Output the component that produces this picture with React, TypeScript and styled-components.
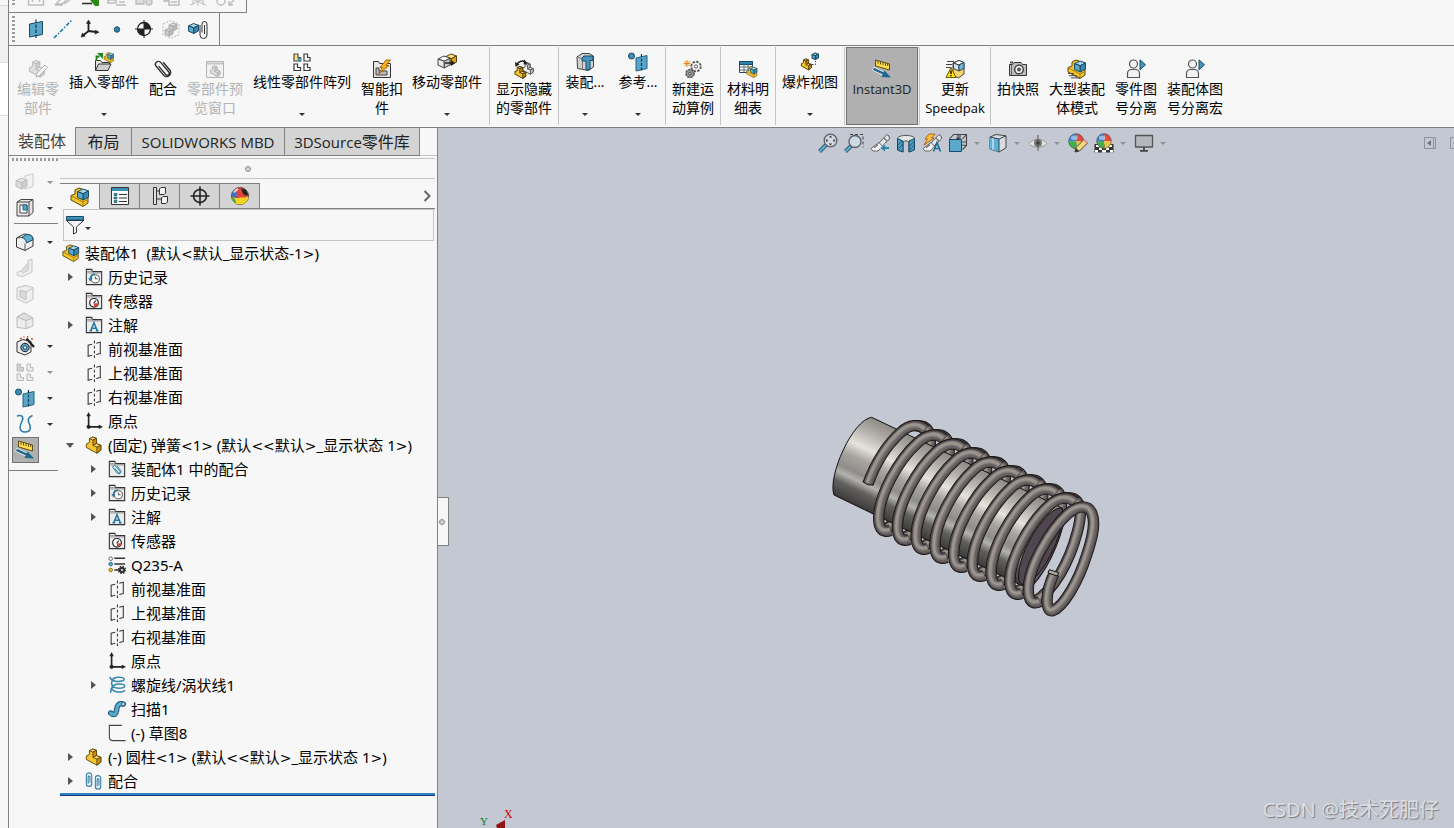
import React from 'react';
import styled, { createGlobalStyle, css } from 'styled-components';

const c = {
  bg: '#f7f7f7',
  tab: '#d4d4d4',
  line: '#808080',
  soft: '#c4c4c4',
  canvas: '#c4c8d3',
  blue: '#5aa9cb',
  deep: '#1f6284',
  pale: '#a9d5e8',
  gold: '#f6c629',
  goldDark: '#c8941a',
  mute: '#bdbdbd',
};

const Global = createGlobalStyle`
  *, *::before, *::after { box-sizing: border-box; }
  body { margin: 0; background: ${c.bg}; color: #000; font-family: "Open Sans", "Noto Sans CJK SC", sans-serif; overflow: hidden; }
  button { font: inherit; color: inherit; background: none; border: 0; padding: 0; margin: 0; }
  ul { list-style: none; margin: 0; padding: 0; }
`;

/* ---------- icon drawings, all on a 20 x 20 grid ---------- */

const Cube = ({ x = 0, y = 0, s = 10, top = c.pale, left = c.blue, right = '#3c87aa', line = '#174a66' }: {
  x?: number; y?: number; s?: number; top?: string; left?: string; right?: string; line?: string;
}) => (
  <g transform={`translate(${x} ${y}) scale(${s / 10})`} stroke={line} strokeWidth={10 / s} strokeLinejoin="round">
    <path d="M0 2.5L5 0l5 1.8L5.2 4.3z" fill={top} />
    <path d="M0 2.5l5.2 1.8V10L0 7.6z" fill={left} />
    <path d="M5.2 4.3L10 1.8v5.6L5.2 10z" fill={right} />
  </g>
);

const Part = ({ x = 0, y = 0, s = 1, main = c.gold, lite = '#ffe27a', dark = c.goldDark, line = '#5c440c' }: {
  x?: number; y?: number; s?: number; main?: string; lite?: string; dark?: string; line?: string;
}) => (
  <g transform={`translate(${x} ${y}) scale(${s})`} stroke={line} strokeWidth={1 / s} strokeLinejoin="round">
    <path d="M1.500 8.500L5 7V2.500l4-1.800 4 1.500v6l5 1.800v5.500L13.500 19 1.500 12.500z" fill={main} />
    <path d="M5 2.500l4-1.800 4 1.500-4 2z" fill={lite} />
    <path d="M9 4.200l4-2v6l-4 2z" fill={dark} />
    <path d="M9 10.200l4-2 5 1.800-4.500 2z" fill={lite} />
    <path d="M13.500 12L18 10v5.500L13.500 19z" fill={dark} />
  </g>
);

const Assembly = (
  <>
    <path d="M1 8.500L5 7V3l4-2 3 1 6 8v6l-5 3.500L1 13z" fill={c.gold} stroke="#5c440c" strokeLinejoin="round" />
    <path d="M1.500 9l11.500 6v4" fill="none" stroke="#a77a12" />
    <path d="M13 15l5-2.500" fill="none" stroke="#a77a12" />
    <Cube x={7.500} y={2} s={11} />
  </>
);

const Folder = (
  <>
    <path d="M1.500 18.500v-17h6l1 2.500h10v14.500z" fill="#ececec" stroke="#333" strokeWidth="1.200" />
    <path d="M2 4h6.500M2.500 5.500H18" fill="none" stroke="#8c8c8c" />
  </>
);

const BluePlane = (
  <>
    <path d="M8 6l11-2.500v13L8 19z" fill="#58a5c8" stroke={c.deep} />
    <path d="M13.500 2v18" stroke="#12384d" strokeDasharray="3 1.500" strokeWidth="1.200" />
    <circle cx="3.500" cy="4" r="3" fill="#3f8fb4" stroke="#174a66" />
  </>
);

const Ruler = (
  <>
    <path d="M3.500 1L17.500 5v6L3.500 7z" fill="#ffd94d" stroke="#5e4b0e" strokeLinejoin="round" />
    <path d="M6 2.200v2.500M8.500 2.800v2.500M11 3.500V6M13.500 4.200v2.500M15.700 5v2" stroke="#5e4b0e" />
    <path d="M1 9.500l11.500 5.800" stroke="#f3f3f3" strokeWidth="4" />
    <path d="M1.500 9.800l11 5.200" stroke="#1e678e" strokeWidth="2.400" />
    <path d="M12.500 11.500L19 18.500l-9.500-.5z" fill="#1e678e" />
  </>
);

const Person = (
  <>
    <circle cx="7.500" cy="5" r="4" fill="#f2f2f2" stroke="#555" strokeWidth="1.200" />
    <path d="M1.500 18.500v-4c0-2.500 2-4 4-4h4c2 0 4 1.500 4 4v4z" fill="#f2f2f2" stroke="#555" strokeWidth="1.200" strokeLinejoin="round" />
    <path d="M14 .8l5.500 5-5.500 5z" fill="#3f95bd" stroke="#174a66" />
  </>
);

const Ball = ({ x = 0, y = 0, r = 8 }: { x?: number; y?: number; r?: number }) => (
  <g transform={`translate(${x} ${y}) scale(${r / 8})`}>
    <path d="M0 8a8 8 0 0 1 8-8c1 3 1 5 0 8z" fill="#3f7fd0" />
    <path d="M8 0a8 8 0 0 1 8 8H8c1-3 1-5 0-8z" fill="#dd4b42" />
    <path d="M0 8h8c1 3 1 5 0 8a8 8 0 0 1-8-8z" fill="#43ae50" />
    <path d="M8 8h8a8 8 0 0 1-8 8c1-3 1-5 0-8z" fill="#f1c543" />
    <ellipse cx="6" cy="4.500" rx="3.500" ry="2.500" fill="#fff" opacity=".45" />
    <circle cx="8" cy="8" r="7.700" fill="none" stroke="#555" strokeWidth=".7" />
  </g>
);

const clip = 'M7 13.500V5a2.500 2.500 0 0 1 5 0v11a3.500 3.500 0 0 1-7 0V6M9.500 6v9';

const Brush = (
  <>
    <path d="M9 10L17 1.500l2 1.500.5 3L12 13z" fill="#e8e8e8" stroke="#555" strokeLinejoin="round" />
    <path d="M9 9.500l3.500 3.800L8 18H3l-2-2.500z" fill="#f5f5f5" stroke="#666" strokeLinejoin="round" />
    <path d="M4 15l4-3.500M14 5l3 3" stroke="#777" strokeWidth="1.300" />
  </>
);

const icons: Record<string, React.ReactNode> = {
  assembly: Assembly,
  part: <Part x={0} y={0.500} s={0.980} />,
  editPart: (
    <>
      <Part y={1} s={0.900} main="#dedede" lite="#efefef" dark="#cfcfcf" line="#bdbdbd" />
      <path d="M8 18l1-4 8-8 2.500 2.500-8 8z" fill="#f7f7f7" stroke="#b0b0b0" />
    </>
  ),
  insert: (
    <>
      <path d="M1.500 18.500V8.500h5l1.500 2h7.500v2" fill="#e6e6e6" stroke="#333" />
      <path d="M1.500 18.500l3-6.500H17l-3 6.500z" fill="#cfcfcf" stroke="#333" strokeLinejoin="round" />
      <path d="M2.500 9V4.500h3" stroke="#1d7d1d" strokeWidth="1.800" fill="none" />
      <path d="M3 1h6v6z" fill="#1d8a1d" />
      <g transform="translate(9.500 0) scale(.55)">{Assembly}</g>
    </>
  ),
  mate: (
    <g transform="rotate(-40 10 10)" fill="none" stroke="#333" strokeWidth="1.400">
      <path d="M6.500 15V3.500a3 3 0 0 1 6 0V16a2 2 0 0 1-4 0V5M6.500 14a4 4 0 0 0 8 2V5" />
    </g>
  ),
  preview: (
    <>
      <path d="M1.500 2.500h17v16h-17z" fill="#f2f2f2" stroke="#b4b4b4" />
      <path d="M2 4.500h16" stroke="#c4c4c4" strokeWidth="2" />
      <Part x={4.500} y={6.500} s={0.580} main="#dedede" lite="#eee" dark="#ccc" line="#b4b4b4" />
    </>
  ),
  pattern: (
    <>
      <path d="M2 2h4v3.500h2.500V9H2z" fill="#ffe27a" stroke="#4b4b4b" strokeWidth="1.200" />
      <path d="M12 2h3.500v3.500H18V9h-6zM2 12h3.500v3.500H8.500V18.500H2zM12 12h3.500v3.500H18v3h-6z" fill="#fff" stroke="#3a3a3a" strokeWidth="1.200" />
      <path d="M6 6h3v3H6z" fill={c.blue} stroke={c.deep} strokeWidth=".6" />
    </>
  ),
  fastener: (
    <>
      <path d="M1.500 18.500V2.500h5l1 2h11v14z" fill="#e6e6e6" stroke="#333" />
      <path d="M4 15V9h3v3h8v4H4z" fill="#bbb" stroke="#444" />
      <path d="M14 1h4.500L14 6.500h3L6.500 15l4-6.500H8z" fill="#ffb21c" stroke="#8a4b00" strokeWidth=".8" />
    </>
  ),
  move: (
    <>
      <Cube x={8.500} y={2} s={11} top="#ffe27a" left="#f6c629" right="#d8a21c" line="#5c440c" />
      <Cube x={1} y={4} s={12} top="#fff" left="#e8e8e8" right="#c9c9c9" line="#444" />
      <path d="M8 11h7" stroke="#222" strokeWidth="1.500" />
      <path d="M14 8l4 3-4 3z" fill="#222" />
    </>
  ),
  showHide: (
    <>
      <Part x={8} y={3.500} s={0.620} main="#eee" lite="#fff" dark="#ccc" line="#555" />
      <Part x={0} y={7} s={0.650} />
      <path d="M2.500 6C4 2.500 8 1 11.500 3" fill="none" stroke="#222" strokeWidth="1.500" />
      <path d="M1 3l.5 5 4-2.500zM10 .5l4 4-4.500 1z" fill="#222" />
    </>
  ),
  feature: (
    <>
      <path d="M2 5l5-3.500h7L18.500 4v11l-5 3.500-11-2z" fill="#cfcfcf" stroke="#444" />
      <path d="M2.500 5l5 2v10" fill="none" stroke="#777" />
      <path d="M7 6l2-2h9v4.500h-3V17l-4 1V9H7z" fill="#4697bb" stroke="#174a66" />
    </>
  ),
  reference: BluePlane,
  motion: (
    <>
      <circle cx="13" cy="7.500" r="4.800" fill="#f1f1f1" stroke="#555" strokeWidth="1.800" strokeDasharray="2.500 1.200" />
      <circle cx="13" cy="7.500" r="1.600" fill="#fff" stroke="#555" />
      <circle cx="7" cy="14.500" r="4" fill="#999" stroke="#555" strokeWidth="1.600" strokeDasharray="2.300 1" />
      <circle cx="7" cy="14.500" r="1.300" fill="#eee" stroke="#444" />
      <path d="M4 1v7M.5 4.500h7M1.500 2l5 5M6.500 2l-5 5" stroke="#e58a1a" />
    </>
  ),
  bom: (
    <>
      <path d="M1.500 2.500h13v11h-13z" fill="#fff" stroke="#2b4c5e" />
      <path d="M1.500 2.500h13v3h-13z" fill="#2f83a8" stroke="#174a66" />
      <path d="M2 8h12M2 11h12M6 5v8M10 5v8" stroke="#55707f" />
      <g transform="translate(8 7) scale(.6)">{Assembly}</g>
    </>
  ),
  explode: (
    <>
      <Part x={0.500} y={6.500} s={0.600} />
      <Cube x={12} y={1} s={6.500} />
      <path d="M9 12.500h6.500V9" fill="none" stroke="#333" strokeDasharray="1.500 1.500" />
    </>
  ),
  instant3d: Ruler,
  update: (
    <>
      <path d="M2 2.500h7M1 5.500h6M1 8.500h5" stroke="#444" />
      <path d="M8 4l6-2.500L19 4v11l-5.500 4L8 16z" fill="#f3d36a" stroke="#444" />
      <Cube x={8.500} y={1.500} s={10.500} top="#fff" left="#d3e7f0" right="#74b4d0" line="#345" />
      <path d="M6 8.500l5 10H1z" fill="#ffe000" stroke="#6b5900" strokeLinejoin="round" />
      <path d="M6 11.500v3.500M6 16v1.300" stroke="#000" strokeWidth="1.400" />
    </>
  ),
  camera: (
    <>
      <path d="M1.500 5.500h3l1.500-2h7l1.500 2h4v11h-17z" fill="#bdbdbd" stroke="#333" />
      <path d="M2 2.500h3v2H2z" fill="#555" />
      <path d="M3.500 6v10" stroke="#666" />
      <circle cx="11" cy="10.500" r="4.300" fill="#eee" stroke="#333" strokeWidth="1.300" />
      <circle cx="11" cy="10.500" r="2" fill="#555" />
    </>
  ),
  largeAsm: (
    <>
      {Assembly}
      <path d="M1 14.500h6M2 16.700h8M4 18.900h9" stroke="#444" />
    </>
  ),
  person: Person,

  plane: (
    <>
      <path d="M3.500 5L16.500 2.500v13L3.500 18z" fill="#5aa5c8" stroke="#174a66" />
      <path d="M10 .5v19" stroke="#12384d" strokeDasharray="3.500 1.500" strokeWidth="1.200" />
    </>
  ),
  axis: <path d="M1 19L19 1" stroke="#2c7da5" strokeWidth="1.700" strokeDasharray="4 1.600 1.500 1.600" />,
  coord: (
    <g stroke="#222" strokeWidth="1.800" fill="#222">
      <path d="M8.500 12V3M8.500 12l8 1M8.500 12L3 16.500" />
      <path d="M8.500 1L6.500 4.500h4zM19 13.200l-3.500-2-.5 3.800zM1 18l1.500-4 2.500 3.200z" strokeWidth=".6" />
    </g>
  ),
  point: <circle cx="10" cy="10.500" r="2.700" fill="#3485ad" stroke="#174a66" />,
  mass: (
    <>
      <circle cx="10" cy="10" r="6.500" fill="#f7f7f7" stroke="#222" strokeWidth="1.300" />
      <path d="M10 3.500A6.500 6.500 0 0 0 3.500 10H10zM10 16.500A6.500 6.500 0 0 0 16.500 10H10z" transform="rotate(90 10 10)" fill="#222" />
      <path d="M10 1v18M1 10h18" stroke="#222" />
    </>
  ),
  bbox: (
    <>
      <path d="M2 5l8-3.500L18 5v11l-8 3-8-3z" fill="none" stroke="#b5b5b5" strokeDasharray="2 1.500" />
      <Cube x={4} y={9} s={8} top="#ddd" left="#ccc" right="#bbb" line="#aaa" />
      <Cube x={8} y={4} s={8} top="#ddd" left="#ccc" right="#bbb" line="#aaa" />
    </>
  ),
  mateRef: (
    <>
      <Cube x={0.500} y={4.500} s={10} />
      <g transform="translate(7 0)"><path d={clip} fill="none" stroke="#333" /></g>
    </>
  ),

  ghost1: (
    <>
      <path d="M10 4l8-2.500v13L10 17z" fill="#f2f2f2" stroke="#ccc" />
      <Cube x={1} y={6} s={11} top="#e6e6e6" left="#dcdcdc" right="#cfcfcf" line="#bebebe" />
    </>
  ),
  section: (
    <>
      <path d="M2 4l4-2.500h12v13L14 18H2z" fill="#e8e8e8" stroke="#444" strokeLinejoin="round" />
      <path d="M2 4h12v14M14 4l4-2.500" fill="none" stroke="#444" />
      <path d="M5 7h7v8H5z" fill="#fff" stroke="#444" />
      <path d="M8 7v5h4V7z" fill={c.blue} stroke={c.deep} />
    </>
  ),
  fillet: (
    <>
      <path d="M1.500 6L9 2l4 .5c3 .5 5 2 5 5V14l-8 4.500L1.500 15z" fill="#f0f0f0" stroke="#333" strokeLinejoin="round" />
      <path d="M6.500 5.500L12 2.300l2 .4c3 1 4 2.300 4 5L11.500 11C11 8 9.500 6 6.500 5.500z" fill="#5eb0d2" stroke="#174a66" />
      <path d="M1.500 6l5-.5M10 11.500v7" fill="none" stroke="#555" />
    </>
  ),
  rib: (
    <g fill="#ededed" stroke="#c6c6c6" strokeLinejoin="round">
      <path d="M2 14.500L13 10V2.500l4-1.500v13L8 18.500l-6-1z" />
      <path d="M6 13L13 5v7l-5 3z" fill="#dcdcdc" />
    </g>
  ),
  shell: (
    <g stroke="#c2c2c2" strokeLinejoin="round">
      <path d="M2 4l8-2.500L18 3.500v12L11 19l-9-4z" fill="#efefef" />
      <path d="M5 6l6 2v8l-6-3zM11 8l7-4" fill="#dadada" />
    </g>
  ),
  draft: (
    <g stroke="#bcbcbc" strokeLinejoin="round">
      <path d="M2 7l7-4 9 5v8l-7 2.500-9-1z" fill="#ececec" />
      <path d="M2 7l9 3.500 7-2.500-9-5z" fill="#dedede" />
      <path d="M11 10.500V18.500" fill="none" />
    </g>
  ),
  wizard: (
    <>
      <path d="M2 6l6-2.500L16 5.500V16l-6 3-8-3z" fill="#ececec" stroke="#333" strokeLinejoin="round" />
      <circle cx="10" cy="11.500" r="4.200" fill="#58a5c8" stroke="#222" />
      <circle cx="10" cy="11.500" r="1.800" fill="#cfe7f2" stroke="#345" />
      <path d="M11.500 2.500L19 11" stroke="#222" strokeWidth="2.200" />
      <path d="M5 2.500h2M12 .8h1.500M16 3h2M8.500 1h1" stroke="#d1581c" strokeWidth="1.500" />
    </>
  ),
  patternOff: (
    <g fill="#ececec" stroke="#b8b8b8">
      <path d="M2 2h3.500v3.500H8.500V9H2z" fill="#d2d2d2" />
      <path d="M12 2h3.500v3.500H18V9h-6zM2 12h3.500v3.500H8.500V18.500H2zM12 12h3.500v3.500H18v3h-6z" />
    </g>
  ),
  curve: <path d="M2 2c5-1.500 7 1 5 5-2 4-4 11 3 11s5.500-6 4-9c-1.500-3.500-.5-6 3.500-7.500" fill="none" stroke="#2c7da5" strokeWidth="1.600" />,

  props: (
    <>
      <path d="M1.500 1.500h17v17h-17z" fill="#fff" stroke="#333" />
      <path d="M2 2h16v3H2z" fill="#3a90b6" />
      <path d="M4 7.500h3v2H4zM4 11h3v2H4zM4 14.500h3v2H4z" fill="#3a90b6" stroke="#174a66" strokeWidth=".6" />
      <path d="M9 8.500h8M9 12h8M9 15.500h8" stroke="#333" />
    </>
  ),
  config: (
    <g stroke="#333" fill="#e0e0e0" strokeLinejoin="round">
      <path d="M3.500 18.500v-17h3v17zM6.500 5h3M6.500 13h6" />
      <path d="M9.500 3L11 1.500h4.500V7L14 8.500H9.500zM11.500 12L13 10.500h4.500V16L16 17.500h-4.500z" fill="#f5f5f5" />
    </g>
  ),
  target: (
    <g fill="none" stroke="#222" strokeWidth="1.600">
      <circle cx="10" cy="10" r="6.500" />
      <path d="M10 .5v19M.5 10h19" />
    </g>
  ),
  appearance: (
    <>
      <circle cx="10" cy="10" r="8.500" fill="#e0453a" stroke="#444" />
      <path d="M1.500 10C2 5 6 1.500 10 1.500 7 4 6 8 7 12z" fill="#3b6fd0" />
      <path d="M5 4C7 2 9 1.500 11 1.500L8 9z" fill="#e0453a" />
      <path d="M1.600 11C4 12 8 12.500 10 11.500c3 0 6 0 8.500-1C18 15 15 18.500 10 18.500 5 18.500 2 15 1.600 11z" fill="#f4d321" />
      <path d="M1.600 10.500c3 1.500 4.500 4 4.500 7C3 16 1.600 13 1.600 10.500z" fill="#3fab49" />
      <path d="M11 2.500l5 1.500 2 5c-2 1-4 0-5-1.500z" fill="#222" />
      <path d="M4 6.500C5 4.500 6.500 3.500 8 3" stroke="#fff" strokeWidth="2" fill="none" opacity=".7" />
    </>
  ),
  funnel: (
    <>
      <path d="M1.500 5.500L8.500 12v7l3-1.500V12l7-6.500z" fill="#f3f3f3" stroke="#333" strokeLinejoin="round" />
      <path d="M1.500 1.500h17v3.500h-17z" fill="#3a93ba" stroke="#174a66" />
    </>
  ),
  history: (
    <>
      {Folder}
      <circle cx="11.500" cy="12" r="4.500" fill="#fff" stroke="#444" />
      <path d="M11.500 9.500V12h2.500" fill="none" stroke="#333" />
      <path d="M11 7C8 7 6 9 6 12" fill="none" stroke="#2c7da5" strokeWidth="1.600" />
      <path d="M3.500 11.500h5L6 15z" fill="#2c7da5" />
    </>
  ),
  sensor: (
    <>
      {Folder}
      <circle cx="10" cy="12" r="4.800" fill="#fff" stroke="#222" strokeWidth="1.300" />
      <path d="M10 12.500h4.300A4.300 4.300 0 0 1 10 16.300z" fill="#e2412c" />
      <path d="M9.500 12.500l2.500-3" stroke="#222" strokeWidth="1.300" />
    </>
  ),
  note: (
    <>
      {Folder}
      <path d="M6.500 16L10 7.500 13.500 16M7.500 13.500h5M5 16.300h3M12 16.300h3" fill="none" stroke="#22789f" strokeWidth="1.700" />
    </>
  ),
  mateFolder: (
    <>
      {Folder}
      <g transform="translate(4.500 4.500) rotate(-40 6 7) scale(.6)" fill="none" stroke="#2c7da5" strokeWidth="1.700">
        <path d="M6.500 15V3.500a3 3 0 0 1 6 0V16a2 2 0 0 1-4 0V5M6.500 14a4 4 0 0 0 8 2V5" />
      </g>
    </>
  ),
  planeLine: (
    <path d="M8 4.700L3.500 5.800v12.400L8 17M12.500 3.600L17 2.500v12.500l-4.500 1.200M10.500 .5v3.500M10.500 6.500v3M10.500 12v3M10.500 17v3" fill="none" stroke="#3a3a3a" strokeWidth="1.200" />
  ),
  origin: (
    <g fill="#222" stroke="#222">
      <path d="M4 16.500V3M4 16.500h13" strokeWidth="1.800" />
      <path d="M4 .5L2 4.500h4zM19.500 16.500l-4-2v4z" strokeWidth=".5" />
      <circle cx="4" cy="16.500" r="1.800" />
    </g>
  ),
  material: (
    <>
      <circle cx="3" cy="3" r="2" fill="#fff" stroke="#555" />
      <circle cx="3" cy="9" r="2" fill={c.blue} stroke={c.deep} />
      <circle cx="3" cy="15.500" r="2" fill={c.gold} stroke="#8a6a10" />
      <path d="M7 2.500h12M7 9h12M7 15.500h6" stroke="#333" strokeWidth="1.700" />
      <circle cx="15.500" cy="15.500" r="2.300" fill="#fff" stroke="#333" strokeWidth="2.400" />
      <circle cx="15.500" cy="15.500" r="4" fill="none" stroke="#333" strokeWidth="1.500" strokeDasharray="1.600 1.550" />
    </>
  ),
  helix: (
    <g fill="none" stroke="#3486ad" strokeWidth="1.700">
      <path d="M2 1c1 3 3 4.500 8 5 5 .2 8-1 8-2.500S15 1.200 11 1.400C6 1.600 4 4 4 8c0 3.500 3 5.500 8 5.500 4 0 6.500-1 6.500-2.500S16 9 12 9c-6 0-9 3-9 9.500" />
      <path d="M4.500 14c1 3 4 3.800 7.500 3.800s6.500-.8 6.500-2.300" />
    </g>
  ),
  sweep: (
    <>
      <path d="M3 14.500c4 3.500 6 1 6.500-3C10 7 11 3 17 4.500" fill="none" stroke="#174a66" strokeWidth="6" strokeLinecap="round" />
      <path d="M3 14.500c4 3.500 6 1 6.500-3C10 7 11 3 17 4.500" fill="none" stroke="#58a9ce" strokeWidth="4" strokeLinecap="round" />
      <circle cx="17" cy="4.500" r="2" fill="#a9d5e8" stroke="#174a66" strokeWidth=".7" />
    </>
  ),
  sketch: <path d="M15.500 1.500h-14v13c0 2.500 1.500 4 4 4h14" fill="none" stroke="#444" strokeWidth="1.200" />,
  mates: (
    <g fill="none" stroke="#2f7fa5" strokeWidth="1.200">
      <path d="M1.500 4v9a3 3 0 0 0 6 0V4a3 3 0 0 0-6 0M3.500 13V5.500a1 1 0 0 1 2 0V12" />
      <path d="M11.500 7v9a3 3 0 0 0 6 0V7a3 3 0 0 0-6 0M13.500 16V8.500a1 1 0 0 1 2 0V15" />
    </g>
  ),

  zoomFit: (
    <>
      <path d="M1.500 18.500L8 12" stroke="#285e7a" strokeWidth="4" />
      <path d="M1.500 18.500L8 12" stroke="#66b0d0" strokeWidth="2" />
      <circle cx="12.500" cy="7.500" r="6.300" fill="#d5dae2" stroke="#5b6068" strokeWidth="1.300" />
      <path d="M12.500 2.500l1.700 2h-3.400zM12.500 12.500l1.700-2h-3.400zM7.500 7.500l2-1.700v3.400zM17.500 7.500l-2-1.700v3.400z" fill="#333" />
    </>
  ),
  zoomArea: (
    <>
      <path d="M6 1.500h13v13" fill="none" stroke="#444" strokeDasharray="3 2" />
      <path d="M1.500 18.500L7 13" stroke="#285e7a" strokeWidth="4" />
      <path d="M1.500 18.500L7 13" stroke="#66b0d0" strokeWidth="2" />
      <circle cx="11" cy="8.500" r="6" fill="#ccd8e2" stroke="#5b6068" strokeWidth="1.300" />
    </>
  ),
  prevView: (
    <>
      {Brush}
      <path d="M19.500 13.500h-4v-3L10 15l5.500 4.500v-3h4z" fill="#2f83a8" stroke="#e8e8e8" strokeWidth=".6" />
    </>
  ),
  cut: (
    <>
      <path d="M1.500 5C4 1.500 16 1.500 18.500 5v11.500L13 19V9c-2-1.500-4-1.500-6 0v10l-5.500-2z" fill="#e5e5e5" stroke="#555" />
      <path d="M1.500 5.500L7 8v11l-5.500-2zM13 8l5.500-2.500V17L13 19z" fill="#4a9cc0" stroke="#174a66" />
      <path d="M2 12l4-4M2 16l5-5M13.500 13l5-5M13.500 17l5-5" stroke="#174a66" strokeWidth=".8" />
    </>
  ),
  dynView: (
    <>
      {Brush}
      <path d="M7 1h6L9.500 5H12L2 12l3.500-6H3z" fill="#ffbe3c" stroke="#a14f0c" strokeWidth=".8" />
      <path d="M11.500 18.500L15 9.500l3.500 9M12.500 15.500h5" fill="none" stroke="#1f6b94" strokeWidth="1.600" />
    </>
  ),
  orient: (
    <>
      <path d="M5.500 1.500h13v11l-4 4M1.500 6l4-4.500M14.500 6l4-4.500M12 1.500v8M7 9h11M14 12l4 .5" fill="none" stroke="#444" strokeWidth="1.100" />
      <path d="M1.500 6.500h12v12h-12z" fill="#5aa9cb" stroke="#174a66" />
      <path d="M10 2v4M8.500 4.500L10 6.500l1.500-2" stroke="#222" fill="none" />
    </>
  ),
  display: (
    <>
      <path d="M2 4l6-2.500 10 1.300v12L11 19l-9-3z" fill="#d8dde0" stroke="#444" strokeLinejoin="round" />
      <path d="M2 4l9 2v13l-9-3z" fill="#5fb0d2" />
      <path d="M5 5v11.500" stroke="#a9d5e8" strokeWidth="2" />
      <path d="M2 4l9 2v13M11 6l7-3.200" fill="none" stroke="#345" />
    </>
  ),
  eye: (
    <>
      <path d="M1 10.500C5 5 15 5 19 10.500 15 15.500 5 15.500 1 10.500z" fill="#e3e3e3" stroke="#999" />
      <circle cx="10" cy="10" r="4" fill="#777" />
      <circle cx="10" cy="10" r="1.800" fill="#333" />
      <path d="M10 2v16" stroke="#555" />
    </>
  ),
  editLook: (
    <>
      <Ball x={0.500} y={0.500} r={7.700} />
      <path d="M7 19l1-4.500 8-8 3.500 3.500-8 8z" fill="#f5d877" stroke="#444" strokeLinejoin="round" />
      <path d="M7 19l1-4 3 3z" fill="#333" />
      <path d="M15 7.500l3.500 3.500 1-1.500L16.500 6z" fill="#e39a95" />
    </>
  ),
  scene: (
    <>
      <path d="M.5 11h19l0 8.500H.5z" fill="#333" />
      <path d="M2 12h3v2H2zM8 17h4v2.500H8zM15 12h3v2h-3zM5 14.500h3v2.500H5zM12 14.500h3v2.500h-3zM1 17h3v2.500H1zM16 17h3v2.500h-3z" fill="#fff" />
      <Ball x={2.500} y={0.500} r={7.500} />
    </>
  ),
  monitor: (
    <>
      <path d="M1.500 2.500h17v11.500h-17z" fill="#b4b7bc" stroke="#555" strokeWidth="1.300" />
      <path d="M10 14v3.500M6 17.800h8" stroke="#444" strokeWidth="1.800" />
    </>
  ),
  paneToggle: (
    <>
      <path d="M4.500 4.500h11v11h-11zM13.500 4.500v11" fill="none" stroke="#8d929c" />
      <path d="M11 7v6l-4-3z" fill="#6d727c" />
    </>
  ),

  cutA: <path d="M2.500 4h15v14h-15zM6 15l4-9 4 9M7.500 12h5" fill="none" stroke={c.mute} strokeWidth="1.400" />,
  cutPen: <path d="M3 17l9-9 5 2-8 7zM2 18h8M11 17l6-4" fill="none" stroke={c.mute} strokeWidth="1.400" />,
  cutGreen: (
    <>
      <path d="M2 16.500h10" stroke="#333" strokeWidth="1.600" />
      <path d="M19 19v-8l-8 2z" fill="#2a8a14" />
      <path d="M10 13l5-1 4 7h-4z" fill="#2a8a14" />
    </>
  ),
  cutLine: <path d="M1 13h8v3H1zM9 18h10M12 15h6" fill="none" stroke={c.mute} strokeWidth="1.600" />,
  cutCam: <path d="M2 12h8v5H2zM12 15a3 3 0 1 0 6 0 3 3 0 1 0-6 0z" fill="#ddd" stroke={c.mute} strokeWidth="1.400" />,
  cutBox: <path d="M2 11l5 3h-5M8 12h10v6H8zM10 15h6" fill="none" stroke={c.mute} strokeWidth="1.600" />,
  cutMesh: <path d="M2 11l16 7M2 18l16-7M10 9v10M5 10v8M15 10v8" fill="none" stroke={c.mute} />,
  cutRing: <path d="M2 14a4 4 0 1 0 8 0 4 4 0 1 0-8 0M14 18l5-5M14 14v4h4" fill="none" stroke={c.mute} strokeWidth="1.400" />,
};

const Svg = styled.svg<{ $s: number }>`
  display: block;
  flex: none;
  width: ${(p) => p.$s}px;
  height: ${(p) => p.$s}px;
`;

const Icon = ({ name, size = 20 }: { name: string; size?: number }) => (
  <Svg $s={size} viewBox="0 0 20 20" aria-hidden="true">{icons[name]}</Svg>
);

const Caret = styled.span<{ $muted?: boolean }>`
  width: 0;
  height: 0;
  flex: none;
  border: 3px solid transparent;
  border-top-color: ${(p) => (p.$muted ? '#8f9299' : '#333')};
  border-bottom-width: 0;
`;

/* ---------- frame ---------- */

const Window = styled.div`
  display: flex;
  height: 100vh;
  min-width: 1240px;
  overflow: hidden;
`;

const Gutter = styled.div`
  width: 8px;
  flex: none;
  display: grid;
  grid-template-rows: 6px 57px 53px 1fr;
  div { border-bottom: 1px solid #dddddd; background: #f7f7f7; }
  div:nth-child(2) { background: #f0f0f0; }
  div:nth-child(3) { background: #ffffff; }
`;

const Main = styled.main`
  flex: 1;
  min-width: 0;
  display: flex;
  flex-direction: column;
  border-left: 1px solid ${c.line};
`;

const ToolbarRow = styled.div`
  flex: none;
  display: flex;
  border-bottom: 1px solid ${c.line};
`;

const ClippedToolbar = styled.div`
  flex: none;
  align-self: flex-start;
  height: 13px;
  padding: 0 8px 5px 3px;
  display: flex;
  align-items: flex-end;
  overflow: hidden;
  border: solid ${c.line};
  border-width: 0 1px 1px 0;
`;

const Toolbar = styled.div`
  height: 32px;
  padding: 0 8px 0 3px;
  display: flex;
  align-items: center;
  border-right: 1px solid ${c.line};
`;

const Grip = styled.span<{ $h: number }>`
  width: 3px;
  height: ${(p) => p.$h}px;
  margin-right: 7px;
  flex: none;
  background: repeating-linear-gradient(#9a9a9a 0 2px, transparent 2px 4px);
`;

const ToolButton = styled.button`
  width: 27px;
  height: 20px;
  display: grid;
  place-items: center;
`;

/* ---------- ribbon ---------- */

const Ribbon = styled.div`
  flex: none;
  display: flex;
  height: 81px;
  padding: 1px 0 2px;
`;

const Divider = styled.i`
  width: 1px;
  flex: none;
  background: ${c.soft};
`;

const RibbonButton = styled.button<{ $w: number; $drop?: boolean; $active?: boolean }>`
  width: ${(p) => p.$w}px;
  flex: none;
  padding: ${(p) => (p.$drop ? 5 : 12)}px 0 9px;
  display: flex;
  flex-direction: column;
  align-items: center;
  font-size: 14px;
  line-height: 19px;
  white-space: pre;
  text-align: center;
  ${Caret} { margin-top: auto; }
  &:disabled { color: #b4b4b4; }
  ${(p) => p.$active && css`
    background: #b0b0b0;
    margin: 0 1px;
    box-shadow: inset 0 0 0 1px #707070;
    color: #222;
  `}
`;

/* Latin words run one size smaller than the Chinese text beside them. */
const Latin = styled.span<{ $size: number }>`
  font-size: ${(p) => p.$size}px;
`;

const Mixed = ({ text, size }: { text: string; size: number }) => (
  <span>
    {text.split(/([A-Za-z0-9 ]+)/).map((part, i) => (i % 2 ? <Latin key={i} $size={size}>{part}</Latin> : part))}
  </span>
);

type Item = { icon: string; text: string; w: number; drop?: boolean; off?: boolean; active?: boolean };
const ribbon: Item[][] = [
  [
    { icon: 'editPart', text: '编辑零\n部件', w: 58, off: true },
    { icon: 'insert', text: '插入零部件', w: 74, drop: true },
    { icon: 'mate', text: '配合', w: 44 },
    { icon: 'preview', text: '零部件预\n览窗口', w: 60, off: true },
    { icon: 'pattern', text: '线性零部件阵列', w: 114, drop: true },
    { icon: 'fastener', text: '智能扣\n件', w: 46 },
    { icon: 'move', text: '移动零部件', w: 84, drop: true },
  ],
  [{ icon: 'showHide', text: '显示隐藏\n的零部件', w: 68 }],
  [
    { icon: 'feature', text: '装配...', w: 52, drop: true },
    { icon: 'reference', text: '参考...', w: 54, drop: true },
  ],
  [{ icon: 'motion', text: '新建运\n动算例', w: 54 }],
  [{ icon: 'bom', text: '材料明\n细表', w: 54 }],
  [{ icon: 'explode', text: '爆炸视图', w: 68, drop: true }],
  [{ icon: 'instant3d', text: 'Instant3D', w: 72, active: true }],
  [{ icon: 'update', text: '更新\nSpeedpak', w: 70 }],
  [
    { icon: 'camera', text: '拍快照', w: 54 },
    { icon: 'largeAsm', text: '大型装配\n体模式', w: 64 },
    { icon: 'person', text: '零件图\n号分离', w: 54 },
    { icon: 'person', text: '装配体图\n号分离宏', w: 64 },
  ],
];

/* ---------- side panel ---------- */

const Body = styled.div`
  flex: 1;
  min-height: 0;
  display: flex;
`;

const Panel = styled.aside`
  width: 429px;
  flex: none;
  display: flex;
  flex-direction: column;
  border-right: 1px solid ${c.line};
`;

const Tabs = styled.div`
  display: flex;
  height: 29px;
  flex: none;
  &::after {
    content: '';
    flex: 1;
    border-top: 1px solid ${c.line};
    border-bottom: 1px solid ${c.soft};
  }
`;

const Tab = styled.button<{ $w: number; $active?: boolean }>`
  width: ${(p) => p.$w}px;
  font-size: 16px;
  line-height: 24px;
  white-space: nowrap;
  color: ${(p) => (p.$active ? '#444' : '#222')};
  background: ${(p) => (p.$active ? c.bg : c.tab)};
  border: solid ${c.line};
  border-width: ${(p) => (p.$active ? '0 1px 1px 0' : '1px 1px 1px 0')};
`;

const PanelBody = styled.div`
  flex: 1;
  display: flex;
  min-height: 0;
`;

const SideTools = styled.div`
  width: 49px;
  flex: none;
  padding-top: 2px;
`;

const SideGrip = styled.div`
  height: 3px;
  margin: 0 0 8px 3px;
  background: repeating-linear-gradient(90deg, #9a9a9a 0 2px, transparent 2px 4px);
`;

const SideRow = styled.div`
  height: 26px;
  padding-left: 3px;
  display: flex;
  align-items: center;
  gap: 8px;
`;

const SideButton = styled.button<{ $active?: boolean }>`
  width: 27px;
  height: 26px;
  padding-left: 3px;
  display: grid;
  align-items: center;
  ${(p) => p.$active && css`
    background: #b0b0b0;
    box-shadow: inset 0 0 0 1px #707070;
  `}
`;

const SideLine = styled.div<{ $end?: boolean }>`
  height: 1px;
  background: ${c.line};
  margin: ${(p) => (p.$end ? '7px 0 0' : '2px 0 5px 5px')};
`;

const Manager = styled.section`
  flex: 1;
  min-width: 0;
  margin: 2px 2px 0 2px;
`;

const Handle = styled.div`
  height: 21px;
  margin-bottom: 4px;
  border: solid ${c.soft};
  border-width: 1px 0;
  display: grid;
  place-items: center;
`;

const Dot = styled.span`
  width: 6px;
  height: 6px;
  border-radius: 50%;
  background: #d0d0d0;
  border: 1px solid #8f8f8f;
`;

const ManagerTabs = styled.div`
  display: flex;
  height: 26px;
`;

const ManagerTab = styled.button<{ $active?: boolean }>`
  width: 40px;
  display: grid;
  place-items: center;
  border: solid ${c.line};
  background: ${(p) => (p.$active ? c.bg : c.tab)};
  border-width: ${(p) => (p.$active ? '1px 1px 0 0' : '1px 1px 1px 0')};
`;

const TabsRest = styled.div`
  flex: 1;
  display: flex;
  justify-content: flex-end;
  align-items: center;
  padding-right: 2px;
  border-bottom: 1px solid ${c.line};
`;

const Filter = styled.label`
  height: 32px;
  margin: 0 1px 0 3px;
  padding-left: 1px;
  display: flex;
  align-items: center;
  border: 1px solid ${c.soft};
  ${Caret} { margin-top: 6px; }
`;

const FilterInput = styled.input`
  flex: 1;
  min-width: 0;
  margin-left: 8px;
  border: 0;
  outline: 0;
  background: transparent;
  font: inherit;
  font-size: 15px;
`;

const Tree = styled.ul`
  border-bottom: 2px solid #2e86bd;
  box-shadow: 0 1px 0 #17347e;
`;

const Node = styled.li<{ $level: number }>`
  height: 24px;
  padding-left: ${(p) => (p.$level ? p.$level * 23 - 17 : 2)}px;
  display: flex;
  align-items: center;
  gap: 5px;
  font-family: "Noto Sans", "Noto Sans CJK SC", sans-serif;
  font-size: 15px;
  line-height: 24px;
  white-space: pre;
`;

const Angle = styled.span`
  font-family: "DejaVu Sans", sans-serif;
  font-size: 14px;
`;

const Twist = styled.span<{ $kind?: 'open' | 'closed' }>`
  width: 14px;
  flex: none;
  &::before {
    content: '';
    display: block;
    width: 0;
    margin-left: ${(p) => (p.$kind === 'open' ? 0 : 2)}px;
    border: 4px solid transparent;
    ${(p) => p.$kind === 'closed' && 'border-left: 5px solid #555; border-right: 0;'}
    ${(p) => p.$kind === 'open' && 'border-top: 5px solid #555; border-bottom: 0;'}
  }
`;

type TreeRow = [level: number, icon: string, text: string, kind?: 'open' | 'closed'];
const tree: TreeRow[] = [
  [0, 'assembly', '装配体1  (默认<默认_显示状态-1>)'],
  [1, 'history', '历史记录', 'closed'],
  [1, 'sensor', '传感器'],
  [1, 'note', '注解', 'closed'],
  [1, 'planeLine', '前视基准面'],
  [1, 'planeLine', '上视基准面'],
  [1, 'planeLine', '右视基准面'],
  [1, 'origin', '原点'],
  [1, 'part', '(固定) 弹簧<1> (默认<<默认>_显示状态 1>)', 'open'],
  [2, 'mateFolder', '装配体1 中的配合', 'closed'],
  [2, 'history', '历史记录', 'closed'],
  [2, 'note', '注解', 'closed'],
  [2, 'sensor', '传感器'],
  [2, 'material', 'Q235-A'],
  [2, 'planeLine', '前视基准面'],
  [2, 'planeLine', '上视基准面'],
  [2, 'planeLine', '右视基准面'],
  [2, 'origin', '原点'],
  [2, 'helix', '螺旋线/涡状线1', 'closed'],
  [2, 'sweep', '扫描1'],
  [2, 'sketch', '(-) 草图8'],
  [1, 'part', '(-) 圆柱<1> (默认<<默认>_显示状态 1>)', 'closed'],
  [1, 'mates', '配合', 'closed'],
];

const Label = ({ text }: { text: string }) => (
  <span>
    {text.split(/([<>]+)/).map((part, i) => (i % 2 ? <Angle key={i}>{part}</Angle> : part))}
  </span>
);

/* ---------- graphics area ---------- */

const Viewport = styled.section`
  position: relative;
  flex: 1;
  min-width: 0;
  overflow: hidden;
  background: ${c.canvas};
  border-top: 1px solid ${c.line};
`;

const ViewTools = styled.div`
  display: flex;
  align-items: center;
  justify-content: center;
  height: 30px;
  padding-left: 94px;
`;

const ViewButton = styled.button`
  height: 26px;
  padding: 0 3px;
  display: flex;
  align-items: center;
  gap: 6px;
  &:has(${Caret}) { padding-right: 5px; }
`;

const PaneButtons = styled.div`
  position: absolute;
  top: 5px;
  right: -12px;
  display: flex;
  gap: 6px;
`;

const Splitter = styled.button`
  position: absolute;
  left: 0;
  top: 369px;
  width: 11px;
  height: 49px;
  display: grid;
  place-items: center start;
  background: ${c.bg};
  border: solid ${c.line};
  border-width: 1px 1px 1px 0;
  ${Dot} { margin-left: 1px; }
`;

const Model = styled.svg`
  position: absolute;
  left: 382px;
  top: 277px;
  width: 290px;
  height: 220px;
`;

const Triad = styled.svg`
  position: absolute;
  left: 40px;
  bottom: 0;
  width: 40px;
  height: 24px;
`;

const Watermark = styled.div`
  position: absolute;
  right: 15px;
  bottom: 4px;
  font-family: "Noto Sans", "Noto Sans CJK SC", sans-serif;
  font-size: 20px;
  line-height: 28px;
  color: #dcdee2;
  text-shadow: 1px 1px 1px #777b80;
  white-space: nowrap;
`;

const viewTools: [string, string, boolean?][] = [
  ['zoomFit', '整屏显示全图'], ['zoomArea', '局部放大'], ['prevView', '上一视图'], ['cut', '剖面视图'],
  ['dynView', '动态注解视图'], ['orient', '视图定向', true], ['display', '显示样式', true],
  ['eye', '隐藏/显示项目', true], ['editLook', '编辑外观'], ['scene', '应用布景', true], ['monitor', '视图设定', true],
];

const frontTurn = 'M372 102C352 84 322 86 293 113C236 164 176 270 176 340C176 374 190 384 212 376';
const leadTurn = 'M316 74C296 56 268 58 242 82C202 118 168 170 144 236';
const backTurn = 'M286 62C330 58 342 92 322 166C300 250 252 344 190 376';
const lastTurn = 'M660 590C638 600 625 588 625 554C625 486 688 376 745 325C778 298 806 300 816 326C828 356 816 402 800 450C775 530 730 606 698 617C674 622 676 560 702 506';

const Tube = ({ d, i = 0 }: { d: string; i?: number }) => (
  <g transform={`translate(${i * 56.200} ${i * 27})`} fill="none">
    <path d={d} stroke="#17140f" strokeWidth="34" />
    <path d={d} stroke="#50464d" strokeWidth="29" />
    <path d={d} stroke="#696262" strokeWidth="22" />
    <path d={d} stroke="#827c79" strokeWidth="14" transform="translate(-2 -2)" />
    <path d={d} stroke="#9a958f" strokeWidth="8" transform="translate(-3 -3)" />
  </g>
);

const turns = Array.from({ length: 9 }, (_, i) => i);

const SpringModel = () => (
  <Model viewBox="0 0 870 660" role="img" aria-label="弹簧与圆柱">
    <defs>
      <linearGradient id="steel" gradientUnits="userSpaceOnUse" x1="155" y1="37" x2="44" y2="268">
        <stop offset="0" stopColor="#8e8b87" />
        <stop offset=".16" stopColor="#b0aca7" />
        <stop offset=".36" stopColor="#e6e2dc" />
        <stop offset=".5" stopColor="#a8a5a1" />
        <stop offset=".66" stopColor="#8f8d8a" />
        <stop offset=".74" stopColor="#b4b2ae" />
        <stop offset=".84" stopColor="#63615f" />
        <stop offset="1" stopColor="#3f3d3b" />
      </linearGradient>
    </defs>
    {turns.map((i) => <Tube key={i} d={backTurn} i={i} />)}
    <path d="M155 37L726 309C740 350 676 520 606 542L42 270C22 214 98 44 155 37z" fill="url(#steel)" stroke="#111" strokeWidth="3" />
    <path d="M726 309C686 300 590 440 596 520C600 552 630 540 660 500C700 450 740 350 726 309z" fill="#51464f" stroke="#111" strokeWidth="3" />
    <Tube d={leadTurn} />
    <path d="M128 230q16 14 32 10" fill="none" stroke="#17140f" strokeWidth="3" />
    {turns.slice(0, 8).map((i) => <Tube key={i} d={frontTurn} i={i} />)}
    <Tube d={lastTurn} />
    <path d="M688 494l28 9-4 10-28-9z" fill="#aaa6a1" stroke="#17140f" strokeWidth="3" />
  </Model>
);

const clippedIcons = ['cutA', 'cutPen', 'cutGreen', 'cutLine', 'cutCam', 'cutBox', 'cutMesh', 'cutRing'];
const refIcons = ['plane', 'axis', 'coord', 'point', 'mass', 'bbox', 'mateRef'];
type Side = [icon: string, caret?: 'on' | 'off'];
const sideTop: Side[] = [['ghost1', 'off'], ['section', 'on']];
const sideRest: Side[] = [
  ['fillet', 'on'], ['rib'], ['shell'], ['draft'], ['wizard', 'on'],
  ['patternOff', 'off'], ['reference', 'on'], ['curve', 'on'], ['instant3d'],
];

const SideItem = ({ item: [icon, caret] }: { item: Side }) => (
  <SideRow>
    <SideButton aria-label={icon} $active={icon === 'instant3d'}><Icon name={icon} /></SideButton>
    {caret && <Caret $muted={caret === 'off'} />}
  </SideRow>
);

export default function App() {
  return (
    <>
      <Global />
      <Window>
        <Gutter><div /><div /><div /></Gutter>
        <Main>
          <ClippedToolbar>
            <Grip $h={12} />
            {clippedIcons.map((n) => <ToolButton key={n} aria-label={n}><Icon name={n} /></ToolButton>)}
          </ClippedToolbar>
          <ToolbarRow>
            <Toolbar>
              <Grip $h={27} />
              {refIcons.map((n) => <ToolButton key={n} aria-label={n}><Icon name={n} /></ToolButton>)}
            </Toolbar>
          </ToolbarRow>
          <Ribbon>
            {ribbon.map((group, g) => (
              <React.Fragment key={g}>
                {g > 0 && <Divider />}
                {group.map((it) => (
                  <RibbonButton key={it.text} $w={it.w} $drop={it.drop} $active={it.active} disabled={it.off}>
                    <Icon name={it.icon} />
                    <Mixed text={it.text} size={13} />
                    {it.drop && <Caret />}
                  </RibbonButton>
                ))}
              </React.Fragment>
            ))}
          </Ribbon>
          <Body>
            <Panel>
              <Tabs>
                <Tab $w={67} $active>装配体</Tab>
                <Tab $w={56}>布局</Tab>
                <Tab $w={153}><Mixed text="SOLIDWORKS MBD" size={15} /></Tab>
                <Tab $w={135}><Mixed text="3DSource零件库" size={15} /></Tab>
              </Tabs>
              <PanelBody>
                <SideTools>
                  <SideGrip />
                  {sideTop.map((s) => <SideItem key={s[0]} item={s} />)}
                  <SideLine />
                  {sideRest.map((s) => <SideItem key={s[0]} item={s} />)}
                  <SideLine $end />
                </SideTools>
                <Manager>
                  <Handle><Dot /></Handle>
                  <ManagerTabs>
                    {['assembly', 'props', 'config', 'target', 'appearance'].map((n, i) => (
                      <ManagerTab key={n} $active={i === 0} aria-label={n}><Icon name={n} /></ManagerTab>
                    ))}
                    <TabsRest>
                      <Svg $s={12} viewBox="0 0 12 12"><path d="M3.500 1l5 5-5 5" fill="none" stroke="#666" strokeWidth="2" /></Svg>
                    </TabsRest>
                  </ManagerTabs>
                  <Filter>
                    <Icon name="funnel" />
                    <Caret />
                    <FilterInput aria-label="过滤器" />
                  </Filter>
                  <Tree>
                    {tree.map(([level, icon, text, kind], i) => (
                      <Node key={i} $level={level}>
                        {level > 0 && <Twist $kind={kind} />}
                        <Icon name={icon} size={18} />
                        <Label text={text} />
                      </Node>
                    ))}
                  </Tree>
                </Manager>
              </PanelBody>
            </Panel>
            <Viewport>
              <ViewTools>
                {viewTools.map(([icon, label, caret]) => (
                  <ViewButton key={icon} aria-label={label}>
                    <Icon name={icon} />
                    {caret && <Caret $muted />}
                  </ViewButton>
                ))}
              </ViewTools>
              <PaneButtons>
                <Icon name="paneToggle" />
                <Icon name="paneToggle" />
              </PaneButtons>
              <Splitter aria-label="折叠面板"><Dot /></Splitter>
              <SpringModel />
              <Triad viewBox="0 0 40 24">
                <path d="M18 21l9-5v8h-8z" fill="#8e1414" />
                <text x="26" y="14" fontFamily="Liberation Serif" fontSize="12" fill="#d00000">X</text>
                <text x="2" y="21" fontFamily="Liberation Serif" fontSize="11" fill="#008000">Y</text>
              </Triad>
              <Watermark>CSDN @技术死肥仔</Watermark>
            </Viewport>
          </Body>
        </Main>
      </Window>
    </>
  );
}
